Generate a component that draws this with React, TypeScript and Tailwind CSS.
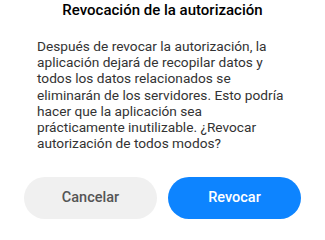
import React from "react";

export default function App() {
  return (
    <div
      className="w-[325px] h-[225px] bg-white overflow-hidden flex flex-col"
      style={{ fontFamily: "Roboto, 'Noto Sans', sans-serif" }}
    >
      <div className="pt-[1px] text-center text-[15px] leading-[18px] font-medium text-[#000000]">
        Revocación de la autorización
      </div>
      <div className="mt-[19px] pl-[37px] pr-[33px] text-[13.7px] leading-[16.2px] text-[#333333]">
        Después de revocar la autorización, la aplicación dejará de recopilar datos y todos los datos relacionados se eliminarán de los servidores. Esto podría hacer que la aplicación sea prácticamente inutilizable. ¿Revocar autorización de todos modos?
      </div>
      <div className="mt-auto mb-[6px] px-[24px] flex gap-[11px]">
        <button className="flex-1 h-[42px] rounded-full bg-[#f0f0f0] text-[#555555] text-[14.5px] font-medium">
          Cancelar
        </button>
        <button className="flex-1 h-[42px] rounded-full bg-[#0d84ff] text-white text-[14.5px] font-medium">
          Revocar
        </button>
      </div>
    </div>
  );
}
